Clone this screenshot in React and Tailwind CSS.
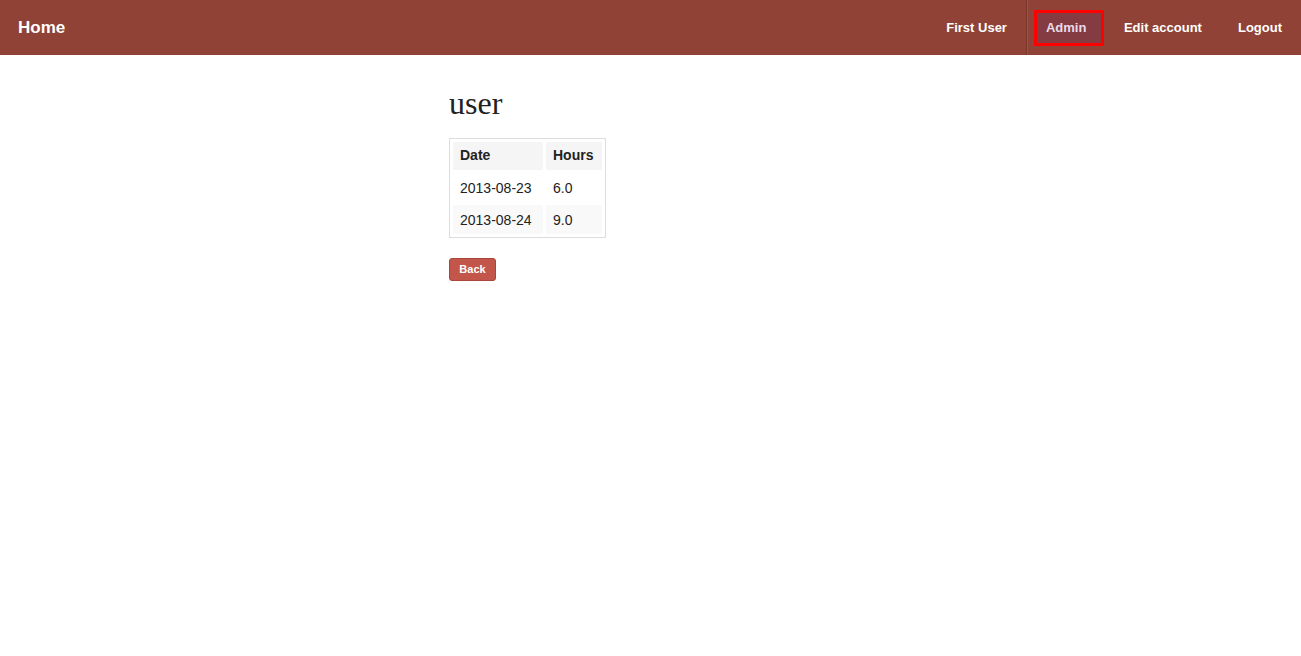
export default function App() {
  return (
    <div className="min-h-[656px] bg-white" style={{ fontFamily: '"Liberation Sans", Arial, sans-serif' }}>
      <div className="h-[55px] bg-[#8f4235] flex items-center justify-between">
        <div className="pl-[18px] text-white font-bold text-[17px]">Home</div>
        <div className="flex items-center h-full text-[13px] font-bold text-white">
          <div className="pr-[19px]">First User</div>
          <div className="h-full w-[2px] border-l border-[#7a362b] border-r-[#9e5145] border-r"></div>
          <div className="ml-[6px] w-[70px] h-[36px] border-[3px] border-[#ff0000] bg-[#853b42] flex items-center pl-[9px] text-[#e8dcea]">Admin</div>
          <div className="ml-[20px]">Edit account</div>
          <div className="ml-[36px] mr-[19px]">Logout</div>
        </div>
      </div>
      <div className="pl-[449px] pt-[30px]">
        <h1 className="text-[32px] leading-[36px] text-[#222]" style={{ fontFamily: '"Liberation Serif", Georgia, serif' }}>user</h1>
        <table className="mt-[17px] border border-[#dddddd] border-separate border-spacing-[3px] text-[14px] text-[#222]">
          <thead>
            <tr className="bg-[#f5f5f5]">
              <th className="text-left font-bold px-[7px] pb-[2px] h-[28px] w-[90px]">Date</th>
              <th className="text-left font-bold px-[7px] pb-[2px] h-[28px] w-[56px]">Hours</th>
            </tr>
          </thead>
          <tbody>
            <tr>
              <td className="px-[7px] pt-[2px] h-[29px]">2013-08-23</td>
              <td className="px-[7px] pt-[2px] h-[29px]">6.0</td>
            </tr>
            <tr className="bg-[#f9f9f9]">
              <td className="px-[7px] pt-[2px] h-[29px]">2013-08-24</td>
              <td className="px-[7px] pt-[2px] h-[29px]">9.0</td>
            </tr>
          </tbody>
        </table>
        <button className="mt-[20px] w-[47px] h-[23px] rounded-[3px] bg-[#c2564a] border border-[#a8463b] text-white text-[11px] font-bold">Back</button>
      </div>
    </div>
  );
}
